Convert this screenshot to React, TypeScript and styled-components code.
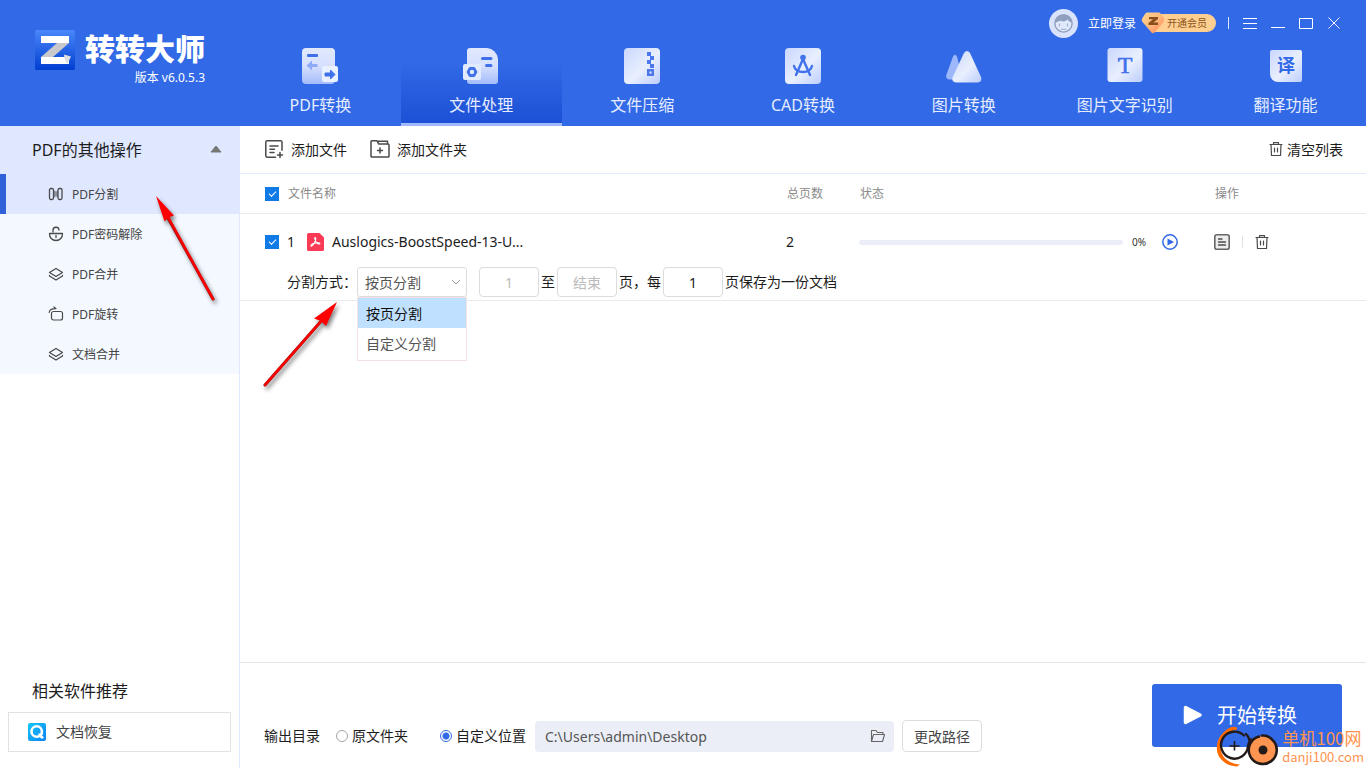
import React from "react";
import styled, { createGlobalStyle } from "styled-components";

const GlobalStyle = createGlobalStyle`
  * { box-sizing: border-box; }
  body { margin: 0; }
  body, button, input, select {
    font-family: "Noto Sans", "Noto Sans CJK SC", sans-serif;
    color: #1c1c1c;
  }
  button { border: 0; padding: 0; background: none; cursor: pointer; }
  svg { display: block; flex: none; }
`;

const Page = styled.div`
  position: relative;
  display: flex;
  flex-direction: column;
  min-height: 100vh;
  background: #fff;
  font-size: 14px;
  line-height: 20px;
  overflow: hidden;
`;

/* ---------- header ---------- */

const Header = styled.header`
  display: flex;
  background: #3169e6;
  color: #fff;
`;

const Brand = styled.div`
  display: flex;
  gap: 10px;
  width: 240px;
  flex: none;
  padding: 30px 0 0 35px;
`;

const BrandText = styled.div`
  display: flex;
  flex-direction: column;
  align-items: flex-end;
`;

const BrandName = styled.h1`
  margin: 0;
  font-size: 30px;
  line-height: 38px;
  font-weight: 900;
`;

const Version = styled.span`
  font-size: 12px;
`;

const HeaderMain = styled.div`
  flex: 1;
  display: flex;
  flex-direction: column;
`;

const Controls = styled.div`
  display: flex;
  align-items: center;
  justify-content: flex-end;
  height: 46px;
  padding-right: 18px;
`;

const Login = styled.button`
  display: flex;
  align-items: center;
  gap: 10px;
  color: #fff;
  font-size: 12px;
`;

const Vip = styled.button`
  display: flex;
  align-items: center;
  height: 24px;
  margin: 0 12px 0 5px;
`;

const VipLabel = styled.span`
  height: 18px;
  margin-left: -10px;
  padding: 0 9px 0 12px;
  border-radius: 0 9px 9px 0;
  background: #ffcf91;
  color: #8a5420;
  font-size: 10px;
  line-height: 18px;
`;

const Divider = styled.span<{ $color: string }>`
  width: 1px;
  height: 12px;
  background: ${(p) => p.$color};
`;

const WindowButtons = styled.div`
  display: flex;
  margin-left: 7px;
`;

const WindowButton = styled.button`
  display: grid;
  place-items: center;
  width: 28px;
  height: 28px;
`;

const Tabs = styled.nav`
  display: flex;
`;

const Tab = styled.button<{ $active?: boolean }>`
  flex: 1;
  display: flex;
  flex-direction: column;
  align-items: center;
  gap: 8px;
  height: 80px;
  padding-top: 1px;
  border-bottom: 3px solid ${(p) => (p.$active ? "#9fb9fb" : "transparent")};
  background: ${(p) => (p.$active ? "linear-gradient(#3169e6 22%, #1d50d6)" : "none")};
  color: #e6edff;
  font-size: 16px;
  line-height: 24px;
`;

/* ---------- body ---------- */

const Body = styled.div`
  flex: 1;
  display: flex;
`;

const Sidebar = styled.aside`
  position: relative;
  display: flex;
  flex-direction: column;
  width: 240px;
  flex: none;
  border-right: 1px solid #dfe8ff;
`;

const GroupHeader = styled.button`
  display: flex;
  align-items: center;
  justify-content: space-between;
  height: 48px;
  padding: 0 17px 2px 32px;
  background: #e0e8ff;
  font-size: 16px;
`;

const SideList = styled.div`
  background: #f4f8ff;
`;

const SideItem = styled.button<{ $active?: boolean }>`
  display: flex;
  align-items: center;
  gap: 8px;
  width: 100%;
  height: 40px;
  padding-left: 42px;
  border-left: 6px solid ${(p) => (p.$active ? "#2f62d9" : "transparent")};
  background: ${(p) => (p.$active ? "#e0e8ff" : "none")};
  color: #444;
  font-size: 12px;
`;

const Related = styled.section`
  margin-top: auto;
  padding: 0 8px 16px;
`;

const RelatedTitle = styled.h2`
  margin: 0 0 10px 24px;
  font-size: 16px;
  line-height: 22px;
  font-weight: 400;
`;

const RelatedLink = styled.a`
  display: flex;
  align-items: center;
  gap: 10px;
  height: 40px;
  padding-left: 19px;
  border: 1px solid #e2e2e2;
  color: #444;
  text-decoration: none;
`;

const Main = styled.main`
  flex: 1;
  min-width: 0;
  display: flex;
  flex-direction: column;
`;

const Toolbar = styled.div`
  display: flex;
  gap: 23px;
  height: 48px;
  padding: 0 23px 0 24px;
  border-bottom: 1px solid #e2eaff;
`;

const ToolButton = styled.button<{ $end?: boolean }>`
  display: flex;
  align-items: center;
  gap: ${(p) => (p.$end ? 4 : 7)}px;
  margin-left: ${(p) => (p.$end ? "auto" : 0)};
  padding-bottom: 1px;
  font-size: 14px;
`;

const FileTable = styled.table`
  width: 100%;
  table-layout: fixed;
  border-collapse: separate;
  border-spacing: 0;

  th, td { padding: 0; text-align: left; }
  th { padding-left: 1px; }
  th:first-child, td:first-child { padding-left: 25px; }
`;

const Col = styled.col<{ $width?: number }>`
  width: ${(p) => (p.$width ? `${p.$width}px` : "auto")};
`;

const HeadCell = styled.th`
  height: 40px;
  border-bottom: 1px solid #eaeaea;
  color: #8a8a8a;
  font-size: 12px;
  font-weight: 400;
`;

const FileCell = styled.td`
  height: 53px;
  padding-top: 3px !important;
`;

const SettingsCell = styled.td`
  height: 34px;
  border-bottom: 1px solid #eaeaea;
`;

const Line = styled.div<{ $gap: number; $end?: number }>`
  display: flex;
  align-items: center;
  gap: ${(p) => p.$gap}px;
  padding-right: ${(p) => p.$end ?? 0}px;
`;

const CheckBox = styled.input`
  appearance: none;
  display: grid;
  place-items: center;
  flex: none;
  width: 14px;
  height: 14px;
  margin: 0;
  background: #107be6;

  &::after {
    content: "";
    width: 6px;
    height: 3px;
    margin-bottom: 2px;
    border: solid #fff;
    border-width: 0 0 1px 1px;
    transform: rotate(-45deg);
  }
`;

const Index = styled.span`
  width: 12px;
`;

const Progress = styled.div`
  flex: 1;
  height: 5px;
  border-radius: 3px;
  background: #ebeef6;
`;

const Percent = styled.span`
  width: 30px;
  margin-left: 9px;
  font-size: 10px;
  color: #333;
`;

const IconButton = styled.button`
  display: block;
`;

const Settings = styled.div`
  position: relative;
  display: flex;
  align-items: center;
  gap: 2px;
  height: 30px;
  margin: 0 0 3px 22px;
  white-space: nowrap;
`;

const SelectWrap = styled.div`
  position: relative;
  margin: 0 10px 0 -2px;

  > svg { position: absolute; right: 6px; top: 12px; pointer-events: none; }
`;

const Select = styled.select`
  appearance: none;
  display: block;
  width: 110px;
  height: 30px;
  padding: 0 7px;
  border: 1px solid #dcdcdc;
  border-radius: 3px;
  background: #fff;
  color: #555;
  font-size: 14px;
`;

const Menu = styled.div`
  position: absolute;
  z-index: 2;
  top: 30px;
  left: 0;
  width: 110px;
  padding-bottom: 2px;
  border: 1px solid #f5e1e4;
  background: #fff;
`;

const MenuItem = styled.button<{ $active?: boolean }>`
  display: block;
  width: 100%;
  height: 30px;
  padding-left: 8px;
  text-align: left;
  font-size: 14px;
  background: ${(p) => (p.$active ? "#bfe0ff" : "#fff")};
  color: ${(p) => (p.$active ? "#111" : "#555")};
`;

const PageInput = styled.input`
  width: 60px;
  height: 30px;
  padding: 0;
  border: 1px solid #dcdcdc;
  border-radius: 4px;
  background: #fff;
  font-size: 14px;
  text-align: center;

  &::placeholder { color: #bbb; opacity: 1; }
`;

const Footer = styled.footer`
  display: flex;
  align-items: flex-end;
  justify-content: space-between;
  margin-top: auto;
  padding: 0 24px;
  border-top: 1px solid #e4e4e4;
`;

const Output = styled.div`
  display: flex;
  align-items: center;
  height: 32px;
  margin-bottom: 16px;
  white-space: nowrap;
`;

const RadioLabel = styled.label`
  display: flex;
  align-items: center;
  gap: 4px;
  margin-left: 16px;

  & + & { margin-left: 32px; }
`;

const Radio = styled.input`
  appearance: none;
  width: 12px;
  height: 12px;
  margin: 0;
  border: 1px solid #a5a5a5;
  border-radius: 50%;

  &:checked {
    border-color: #3169e6;
    background: radial-gradient(#3169e6 3px, #fff 4px);
  }
`;

const PathBox = styled.div`
  display: flex;
  align-items: center;
  width: 359px;
  height: 31px;
  margin: 0 8px 0 9px;
  padding-right: 8px;
  border-radius: 4px;
  background: #ebeef6;
`;

const PathInput = styled.input`
  flex: 1;
  min-width: 0;
  padding: 0 0 0 10px;
  border: 0;
  background: none;
  color: #555;
  font-size: 14px;
`;

const ChangeButton = styled.button`
  width: 80px;
  height: 32px;
  border: 1px solid #dcdcdc;
  border-radius: 4px;
  color: #444;
  font-size: 14px;
`;

const StartButton = styled.button`
  display: flex;
  align-items: center;
  gap: 14px;
  width: 190px;
  height: 63px;
  margin: 21px 0;
  padding: 0 0 2px 31px;
  border-radius: 3px;
  background: #3169e6;
  color: #fff;
  font-size: 20px;
`;

/* ---------- overlays ---------- */

const Arrow = styled.svg<{ $left: number; $top: number }>`
  position: absolute;
  z-index: 3;
  left: ${(p) => p.$left}px;
  top: ${(p) => p.$top}px;
  pointer-events: none;
  filter: drop-shadow(2px 3px 2px rgba(0, 0, 0, 0.5));
`;

const Watermark = styled.div`
  position: absolute;
  z-index: 4;
  right: 2px;
  bottom: 0;
  display: flex;
  align-items: center;
  gap: 2px;
  color: #ff9450;
  pointer-events: none;
`;

const WatermarkText = styled.div`
  display: flex;
  flex-direction: column;
  font-family: "Noto Sans CJK SC", sans-serif;
`;

const WatermarkName = styled.span`
  font-size: 17px;
  line-height: 20px;
`;

const WatermarkUrl = styled.span`
  font-size: 13px;
  line-height: 18px;
`;

/* ---------- drawings ---------- */

const Gradients = () => (
  <svg width="0" height="0" style={{ position: "absolute" }} aria-hidden="true">
    <defs>
      <linearGradient id="sheet" x1="0" y1="0" x2="1" y2="1">
        <stop offset="0" stopColor="#cad7fd" />
        <stop offset="0.55" stopColor="#e9effe" />
        <stop offset="1" stopColor="#bccdfc" />
      </linearGradient>
      <linearGradient id="fade" x1="0" y1="0" x2="0" y2="1">
        <stop offset="0" stopColor="#e2e9fe" />
        <stop offset="0.5" stopColor="#d6e0fe" />
        <stop offset="1" stopColor="#a4bcfb" />
      </linearGradient>
      <linearGradient id="logo" x1="0" y1="0" x2="0" y2="1">
        <stop offset="0" stopColor="#4a87fb" />
        <stop offset="1" stopColor="#003fd0" />
      </linearGradient>
      <linearGradient id="gem" x1="0" y1="0" x2="1" y2="1">
        <stop offset="0" stopColor="#ffd591" />
        <stop offset="0.45" stopColor="#ffbd7c" />
        <stop offset="0.9" stopColor="#ff8d62" />
      </linearGradient>
      <linearGradient id="drop" x1="0" y1="0" x2="1" y2="1">
        <stop offset="0" stopColor="#16c7f5" />
        <stop offset="1" stopColor="#0a83f5" />
      </linearGradient>
    </defs>
  </svg>
);

const LogoMark = () => (
  <svg width="40" height="40" viewBox="0 0 40 40">
    <rect width="40" height="40" rx="1.5" fill="url(#logo)" />
    <path d="M6 6h28v7H6z M6 27h28v7H6z" fill="#fff" />
    <path d="M6 27 22 13h12L18 27z" fill="#c8c9cc" />
    <path d="M29 24.500l7 2-3.500 7.500-3-5z" fill="#dcdee2" />
  </svg>
);

const PdfIcon = () => (
  <svg width="38" height="38" viewBox="0 0 38 38">
    <rect x="1" y="1" width="33" height="36" rx="4" fill="url(#fade)" />
    <rect x="6" y="7" width="11" height="3" rx="1" fill="#3f70ea" />
    <path d="M5.500 18.500 11 13.500v3.500h5.500v3H11v3.500z" fill="#8fabf7" />
    <rect x="21" y="19" width="16" height="16" rx="2" fill="#e9f0ff" />
    <path d="M34 27.500 29.500 23v3H24v3h5.500v3z" fill="#3f70ea" stroke="#3f70ea" strokeLinejoin="round" />
  </svg>
);

const ProcessIcon = () => (
  <svg width="38" height="38" viewBox="0 0 38 38">
    <path d="M8 1h17a12 12 0 0 1 11 11v22a3 3 0 0 1-3 3H8a3 3 0 0 1-3-3V4a3 3 0 0 1 3-3z" fill="url(#fade)" />
    <path d="M20.500 11.500h8.500M24.500 18.500h4.500" stroke="#3f70ea" strokeWidth="3" strokeLinecap="round" />
    <rect x="1" y="17" width="18" height="16" rx="2" fill="#e2eafe" />
    <path d="M7.500 20.500h5l2.500 4.500-2.500 4.500h-5L5 25z" fill="#3f70ea" stroke="#3f70ea" strokeLinejoin="round" />
    <circle cx="10" cy="25" r="2.200" fill="#e2eafe" />
  </svg>
);

const Square = ({ children }: { children: React.ReactNode }) => (
  <svg width="38" height="38" viewBox="0 0 38 38">
    <rect x="1" y="1" width="36" height="36" rx="4" fill="url(#sheet)" />
    {children}
  </svg>
);

const ZipIcon = () => (
  <Square>
    <path d="M24 5h4v4h3v4h-3v4h3v4h-4v-4h-3v-4h3V9h-3z" fill="#4a77ec" />
    <path d="M25.200 23.200h4.600v4.600h-4.600z" fill="none" stroke="#4a77ec" strokeWidth="2.400" />
  </Square>
);

const CadIcon = () => (
  <Square>
    <g fill="none" stroke="#4272eb" strokeWidth="2.400" strokeLinecap="round">
      <path d="M19 12l-7 16M19 12l7 16" />
      <path d="M10 19c1 4 5 6 9 6s8-2 9-6" />
    </g>
    <circle cx="19" cy="10.500" r="2.800" fill="#4272eb" />
  </Square>
);

const PictureIcon = () => (
  <svg width="38" height="38" viewBox="0 0 38 38">
    <path d="M8 9.500q2-3.500 4 0l5 20q0 3-3 3H4q-4-1-2.500-5z" fill="#9db7fb" />
    <path d="M19 6q3-4 6 0l11 24q1.500 4.500-3 5.500H11q-4.500-.5-3.500-5z" fill="url(#sheet)" />
  </svg>
);

const OcrIcon = () => (
  <svg width="38" height="38" viewBox="0 0 38 38">
    <rect x="1.500" y="1" width="35" height="34" rx="3" fill="url(#sheet)" />
    <text x="19" y="26" textAnchor="middle" fontFamily="Liberation Serif, serif" fontSize="24" stroke="#4272eb" strokeWidth="0.600" fill="#4272eb">T</text>
  </svg>
);

const TranslateIcon = () => (
  <svg width="38" height="38" viewBox="0 0 38 38">
    <path d="M5 3h28a2 2 0 0 1 2 2v28a2 2 0 0 1-2 2H11a8 8 0 0 1-8-8V5a2 2 0 0 1 2-2z" fill="url(#sheet)" />
    <text x="19" y="25" textAnchor="middle" fontFamily="Noto Sans CJK SC, sans-serif" fontSize="18" fontWeight="700" fill="#3169e6">译</text>
  </svg>
);

const Avatar = () => (
  <svg width="29" height="29" viewBox="0 0 29 29">
    <circle cx="14.500" cy="14.500" r="14.500" fill="#d9e3fb" />
    <circle cx="14.500" cy="14.500" r="8.600" fill="#dfe8fc" stroke="#8f9fbd" strokeWidth="1.400" />
    <path d="M6 13.500C6 8 10 5.500 14.500 5.500S23 8 23 13.500c-2 0-3.500-1.500-4.500-3-2 2-4 2.500-6 1.500C10.500 11 9 13.500 6 13.500z" fill="#8f9fbd" />
    <path d="M10.500 14.500v3M18.500 14.500v3M12 20q2.500 1 5 0" stroke="#a5b3cf" strokeWidth="1.200" fill="none" />
  </svg>
);

const Gem = () => (
  <svg width="24" height="24" viewBox="0 0 24 24" style={{ position: "relative" }}>
    <path d="M6.500 1.500h11q1.500 0 2.300 1.200l3.200 5q.8 1.800-.5 3.300L13.500 21.500q-1.500 1.500-3 0L1.500 11Q.2 9.500 1 7.700l3.200-5Q5 1.500 6.500 1.500z" fill="url(#gem)" />
    <path d="M8 6h9v2l-4.500 3.500H17V14H7.500v-2L12 8.300H8z" fill="#8a4f1e" />
  </svg>
);

const stroke = { fill: "none", stroke: "#4a4a4a", strokeWidth: 1.3, strokeLinecap: "round", strokeLinejoin: "round" } as const;

const SplitIcon = () => (
  <svg width="16" height="16" viewBox="0 0 16 16" {...stroke}>
    <path d="M6 4.500l2 1 2-1v7l-2-1-2 1z" fill="#8d919b" stroke="none" />
    <rect x="1.500" y="2.500" width="4" height="11" rx="1.500" />
    <rect x="10" y="2.500" width="4" height="11" rx="1.500" />
  </svg>
);

const UnlockIcon = () => (
  <svg width="16" height="16" viewBox="0 0 16 16" {...stroke}>
    <path d="M1.500 7.500h13c.2 4-2.500 7-6.500 7s-6.700-3-6.500-7z" />
    <path d="M5 6V4.500a3 3 0 0 1 6-.5M8 9.500v2" />
  </svg>
);

const LayersIcon = () => (
  <svg width="16" height="16" viewBox="0 0 16 16" {...stroke}>
    <path d="M8 2.500l6.500 4-6.500 4-6.500-4z" />
    <path d="M1.500 9.500v.5l6.500 4 6.500-4v-.5" />
  </svg>
);

const RotateIcon = () => (
  <svg width="16" height="16" viewBox="0 0 16 16" {...stroke} strokeWidth={1.2}>
    <rect x="3.500" y="5.500" width="11" height="8.500" rx="2" />
    <path d="M1.200 6.500C1.500 4 3.500 2.700 7.500 2.700M6 1l2 1.700" />
  </svg>
);

const AddFileIcon = () => (
  <svg width="20" height="20" viewBox="0 0 20 20" {...stroke} strokeWidth={1.5}>
    <path d="M11.500 18.200H3.300a1.500 1.500 0 0 1-1.500-1.500V3.300a1.500 1.500 0 0 1 1.500-1.500h13.200a1.500 1.500 0 0 1 1.500 1.500v8" />
    <path d="M6 7h8M6 10.200h4.500M6 13.500h4M16 13.500v5M13.500 16h5" />
  </svg>
);

const AddFolderIcon = () => (
  <svg width="20" height="20" viewBox="0 0 20 20" {...stroke} strokeWidth={1.5}>
    <path d="M1 16.500v-14a.8.8 0 0 1 .8-.8h5l2 3.300h9.400a.8.8 0 0 1 .8.8v11.400a.8.8 0 0 1-.8.8H1.800a.8.8 0 0 1-.8-.8z" />
    <path d="M8 2.200h9.500v2.300M10 9v5M7.500 11.500h5" />
  </svg>
);

const TrashIcon = () => (
  <svg width="14" height="16" viewBox="0 0 14 16" {...stroke} strokeWidth={1.2}>
    <path d="M1 3.500h12M4.500 3.500V1.700h5v1.800M2 3.500l.5 11h9l.5-11M5.500 7v4M8.500 7v4" />
  </svg>
);

const PdfFileIcon = () => (
  <svg width="17" height="18" viewBox="0 0 17 18">
    <path d="M1.500 0h11L17 4.500v12a1.500 1.500 0 0 1-1.500 1.500h-14A1.500 1.500 0 0 1 0 16.500v-15A1.500 1.500 0 0 1 1.500 0z" fill="#fb3a56" />
    <path d="M8 4.500c1.500 0 .5 4-1.500 7-1.500 2-3 2-2.500.8C5 10.500 10 9 12.500 10c1 .8-.5 1.500-2 .5C8.500 9 7 5 8 4.500z" fill="none" stroke="#fff" strokeWidth="1.100" />
  </svg>
);

const PlayIcon = () => (
  <svg width="16" height="16" viewBox="0 0 16 16">
    <circle cx="8" cy="8" r="7.200" fill="#fff" stroke="#3169e6" strokeWidth="1.500" />
    <path d="M5.500 4.500 12 8l-6.500 3.500z" fill="#3169e6" />
  </svg>
);

const DetailIcon = () => (
  <svg width="16" height="16" viewBox="0 0 16 16" {...stroke}>
    <rect x="0.800" y="0.800" width="14.400" height="14.400" rx="2" fill="#ececec" stroke="#666" strokeWidth="1.600" />
    <path d="M4.500 5h3.500M4.500 8h7M4.500 11h7" />
  </svg>
);

const FolderIcon = () => (
  <svg width="16" height="16" viewBox="0 0 16 16" {...stroke} stroke="#666" strokeWidth={1.1}>
    <path d="M1.500 13.500v-11h4.500l1.500 2h5.500v2M1.500 13.500l2-7h11l-2 7z" />
  </svg>
);

const RecoverIcon = () => (
  <svg width="18" height="18" viewBox="0 0 18 18">
    <rect width="18" height="18" rx="2" fill="url(#drop)" />
    <circle cx="8.700" cy="8.500" r="5.200" fill="none" stroke="#fff" strokeWidth="2.600" />
    <path d="M10 10.500h5.500L14 12.500l2 2-2 1.500-2.500-2z" fill="#fff" />
  </svg>
);

const WatermarkLogo = () => (
  <svg width="64" height="42" viewBox="0 0 64 42">
    <path d="M21 1.500C15-1 10 4 6 8 0 14-1 26 4 32s10 8 17 8.500l3-2C14 38 4 32 4.500 20 5 12 12 5 21 3.500z" fill="#ff6a00" />
    <path d="M28 9.500A13.500 13.500 0 1 0 32 20q0-3 3-6.500M30 8q4 4 4 11" fill="none" stroke="#241a19" strokeWidth="2.400" strokeLinecap="round" />
    <path d="M18.500 15v9.500M13.500 20h10" stroke="#241a19" strokeWidth="1.600" />
    <circle cx="47" cy="24" r="14" fill="#ff9450" />
    <path d="M43 10.500A14 14 0 1 0 56 13.500M46 9.500q6-.5 10 4" fill="none" stroke="#241a19" strokeWidth="2.600" strokeLinecap="round" />
    <circle cx="47" cy="24" r="4.500" fill="#241a19" />
  </svg>
);

const tabs = [
  { label: "PDF转换", icon: <PdfIcon /> },
  { label: "文件处理", icon: <ProcessIcon />, active: true },
  { label: "文件压缩", icon: <ZipIcon /> },
  { label: "CAD转换", icon: <CadIcon /> },
  { label: "图片转换", icon: <PictureIcon /> },
  { label: "图片文字识别", icon: <OcrIcon /> },
  { label: "翻译功能", icon: <TranslateIcon /> },
];

const operations = [
  { label: "PDF分割", icon: <SplitIcon />, active: true },
  { label: "PDF密码解除", icon: <UnlockIcon /> },
  { label: "PDF合并", icon: <LayersIcon /> },
  { label: "PDF旋转", icon: <RotateIcon /> },
  { label: "文档合并", icon: <LayersIcon /> },
];

const windowButtons = [
  { label: "菜单", path: "M0 2.500h14M0 7.500h14M0 12.500h14" },
  { label: "最小化", path: "M0 11.500h14" },
  { label: "最大化", path: "M.5 2.500h13v10H.5z" },
  { label: "关闭", path: "M1.500 1.500l11 11M12.500 1.500l-11 11" },
];

export default function App() {
  return (
    <Page>
      <GlobalStyle />
      <Gradients />
      <Header>
        <Brand>
          <LogoMark />
          <BrandText>
            <BrandName>转转大师</BrandName>
            <Version>版本 v6.0.5.3</Version>
          </BrandText>
        </Brand>
        <HeaderMain>
          <Controls>
            <Login><Avatar />立即登录</Login>
            <Vip><Gem /><VipLabel>开通会员</VipLabel></Vip>
            <Divider $color="#dce6ff" />
            <WindowButtons>
              {windowButtons.map((b) => (
                <WindowButton key={b.label} aria-label={b.label}>
                  <svg width="14" height="15" viewBox="0 0 14 15" fill="none" stroke="#fff"><path d={b.path} /></svg>
                </WindowButton>
              ))}
            </WindowButtons>
          </Controls>
          <Tabs>
            {tabs.map((t) => (
              <Tab key={t.label} $active={t.active}>{t.icon}{t.label}</Tab>
            ))}
          </Tabs>
        </HeaderMain>
      </Header>

      <Body>
        <Sidebar>
          <GroupHeader>
            PDF的其他操作
            <svg width="12" height="8" viewBox="0 0 12 8"><path d="M6 1l5 6H1z" fill="#777" stroke="#777" strokeLinejoin="round" /></svg>
          </GroupHeader>
          <SideList>
            {operations.map((o) => (
              <SideItem key={o.label} $active={o.active}>{o.icon}{o.label}</SideItem>
            ))}
          </SideList>
          <Related>
            <RelatedTitle>相关软件推荐</RelatedTitle>
            <RelatedLink href="#"><RecoverIcon />文档恢复</RelatedLink>
          </Related>
          <Arrow $left={156} $top={70} width="60" height="106" viewBox="0 0 60 106">
            <path d="M12 22 57 103" stroke="#8b1010" strokeWidth="3" strokeLinecap="round" />
            <path d="M0 0 18 19.500 12.500 21.500 8.500 25.500z" fill="#f00" />
            <path d="M12 21 57 103" stroke="#f00" strokeWidth="2.500" strokeLinecap="round" />
          </Arrow>
        </Sidebar>

        <Main>
          <Toolbar>
            <ToolButton><AddFileIcon />添加文件</ToolButton>
            <ToolButton><AddFolderIcon />添加文件夹</ToolButton>
            <ToolButton $end><TrashIcon />清空列表</ToolButton>
          </Toolbar>

          <FileTable>
            <colgroup>
              <Col />
              <Col $width={73} />
              <Col $width={355} />
              <Col $width={152} />
            </colgroup>
            <thead>
              <tr>
                <HeadCell>
                  <Line $gap={9}><CheckBox type="checkbox" defaultChecked aria-label="全选" />文件名称</Line>
                </HeadCell>
                <HeadCell>总页数</HeadCell>
                <HeadCell>状态</HeadCell>
                <HeadCell>操作</HeadCell>
              </tr>
            </thead>
            <tbody>
              <tr>
                <FileCell>
                  <Line $gap={8}>
                    <CheckBox type="checkbox" defaultChecked aria-label="选择文件" />
                    <Index>1</Index>
                    <PdfFileIcon />
                    Auslogics-BoostSpeed-13-U...
                  </Line>
                </FileCell>
                <FileCell>2</FileCell>
                <FileCell>
                  <Line $gap={0} $end={36}>
                    <Progress />
                    <Percent>0%</Percent>
                    <IconButton aria-label="开始"><PlayIcon /></IconButton>
                  </Line>
                </FileCell>
                <FileCell>
                  <Line $gap={12}>
                    <IconButton aria-label="详情"><DetailIcon /></IconButton>
                    <Divider $color="#e2e2e2" />
                    <IconButton aria-label="删除"><TrashIcon /></IconButton>
                  </Line>
                </FileCell>
              </tr>
              <tr>
                <SettingsCell colSpan={4}>
                  <Settings>
                    <label htmlFor="mode">分割方式：</label>
                    <SelectWrap>
                      <Select id="mode" defaultValue="page">
                        <option value="page">按页分割</option>
                        <option value="custom">自定义分割</option>
                      </Select>
                      <svg width="10" height="7" viewBox="0 0 10 7" fill="none" stroke="#999"><path d="M1 1l4 4 4-4" /></svg>
                      <Menu>
                        <MenuItem $active>按页分割</MenuItem>
                        <MenuItem>自定义分割</MenuItem>
                      </Menu>
                    </SelectWrap>
                    <PageInput placeholder="1" aria-label="起始页" />
                    <label htmlFor="end">至</label>
                    <PageInput id="end" placeholder="结束" />
                    <label htmlFor="every">页，每</label>
                    <PageInput id="every" defaultValue="1" />
                    <span>页保存为一份文档</span>
                    <Arrow $left={-24} $top={34} width="76" height="86" viewBox="0 0 76 86">
                      <path d="M2 84 60 18" stroke="#8b1010" strokeWidth="3" strokeLinecap="round" />
                      <path d="M74 1 63 25 58 20 51 17.500z" fill="#f00" />
                      <path d="M2 84 60 18" stroke="#f00" strokeWidth="2.500" strokeLinecap="round" />
                    </Arrow>
                  </Settings>
                </SettingsCell>
              </tr>
            </tbody>
          </FileTable>

          <Footer>
            <Output>
              输出目录
              <RadioLabel><Radio type="radio" name="dir" />原文件夹</RadioLabel>
              <RadioLabel><Radio type="radio" name="dir" defaultChecked />自定义位置</RadioLabel>
              <PathBox>
                <PathInput defaultValue="C:\Users\admin\Desktop" aria-label="输出路径" />
                <IconButton aria-label="打开文件夹"><FolderIcon /></IconButton>
              </PathBox>
              <ChangeButton>更改路径</ChangeButton>
            </Output>
            <StartButton>
              <svg width="20" height="20" viewBox="0 0 20 20"><path d="M2.500 2.500 17 10 2.500 17.500z" fill="#fff" stroke="#fff" strokeWidth="3.500" strokeLinejoin="round" /></svg>
              开始转换
            </StartButton>
          </Footer>
        </Main>
      </Body>

      <Watermark>
        <WatermarkLogo />
        <WatermarkText>
          <WatermarkName>单机100网</WatermarkName>
          <WatermarkUrl>danji100.com</WatermarkUrl>
        </WatermarkText>
      </Watermark>
    </Page>
  );
}
